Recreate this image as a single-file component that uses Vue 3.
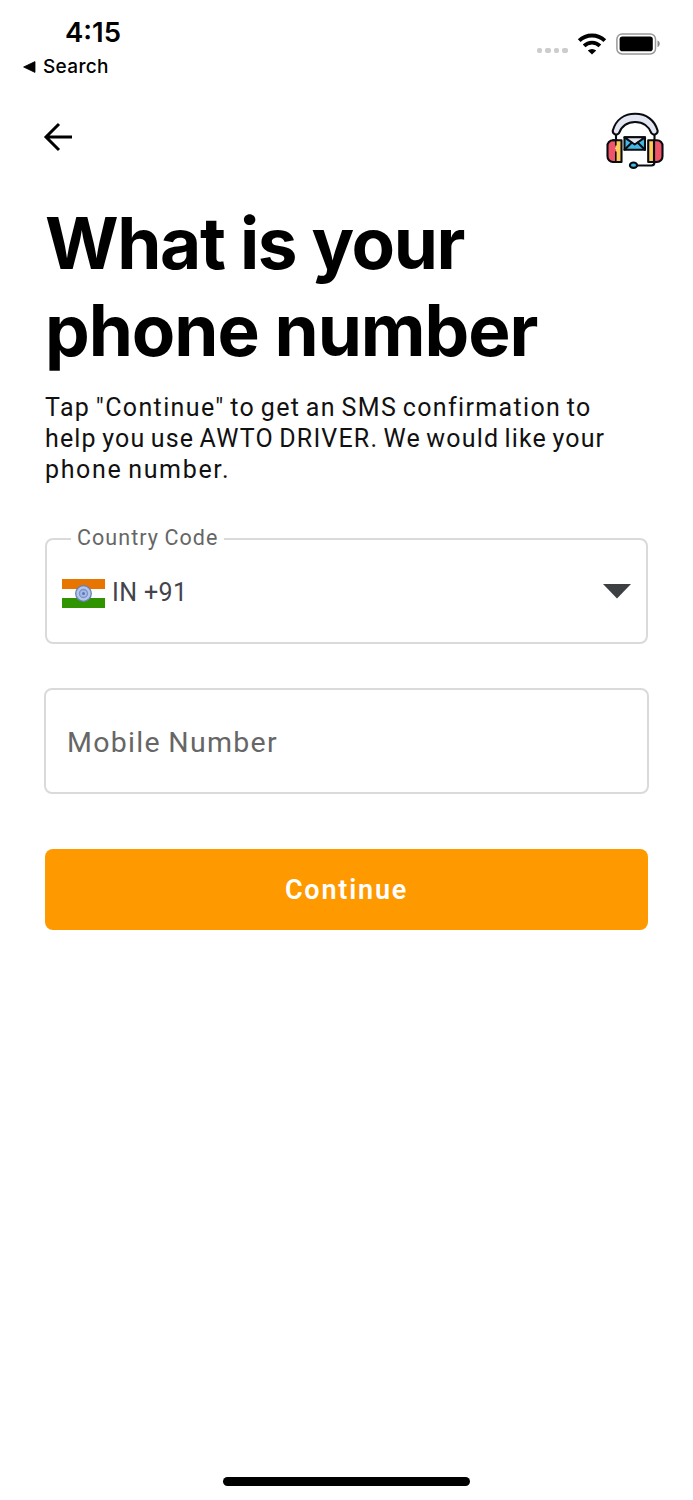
<template>
  <div class="screen">
    <header class="status-bar">
      <div class="status-left">
        <span class="time">4:15</span>
        <a class="back-app">
          <svg width="13" height="12" viewBox="0 0 13 12"><path d="M.6 6 12 .6v10.8z" stroke="#000" stroke-width=".8" stroke-linejoin="round" /></svg>
          <span>Search</span>
        </a>
      </div>
      <div class="status-right">
        <div class="signal"><i v-for="n in 4" :key="n"></i></div>
        <svg class="wifi" width="30" height="22" viewBox="0 0 30 22" fill="none">
          <path d="M2.2 7.7a18.3 18.3 0 0 1 25.6 0" stroke="#000" stroke-width="3.9" />
          <path d="M7.1 12.8a11.2 11.2 0 0 1 15.8 0" stroke="#000" stroke-width="3.8" />
          <path d="M10.8 17.6a6 6 0 0 1 8.4 0L15 21.6z" fill="#000" />
        </svg>
        <svg class="battery" width="46" height="22" viewBox="0 0 46 22">
          <rect x=".9" y=".9" width="38.6" height="20" rx="5.2" fill="none" stroke="#999" stroke-width="1.5" />
          <rect x="3.6" y="3.6" width="33.2" height="14.6" rx="2.8" />
          <path d="M41.5 7.6c3 1 3 5.6 0 6.6z" fill="#888" />
        </svg>
      </div>
    </header>

    <nav class="nav">
      <button class="icon-btn" aria-label="Back">
        <svg width="30" height="30" viewBox="0 0 30 30" fill="none" stroke="#000" stroke-width="3">
          <path d="M29 15H3M16 2 3 15l13 13" />
        </svg>
      </button>
      <button class="icon-btn" aria-label="Support">
        <svg width="58" height="58" viewBox="0 0 58 58" stroke="#080c10" stroke-width="2.1" stroke-linejoin="round" stroke-linecap="round">
          <path d="M10 20v9M48.5 20v9" fill="none" />
          <path d="M6.8 18.5C10 7.5 18.5 1.8 29.2 1.8S48.5 7.5 51.6 18.5a3.5 3.5 0 0 1-6.2 2.7C43 14.5 37 10 29.2 10S15.5 14.5 13 21.2a3.5 3.5 0 0 1-6.2-2.7z" fill="#e4e7f2" />
          <path d="M11 28.3H7a5.5 5.5 0 0 0-5.5 6v10A5.5 5.5 0 0 0 7 50h5z" fill="#ee5568" />
          <path d="M10 28.3h5.5V50H10z" fill="#ffcc57" stroke="none" />
          <path d="M7 28.3h8.5V50H7" fill="none" />
          <path d="M48 28.3h3a5.5 5.5 0 0 1 5.5 6v10A5.5 5.5 0 0 1 51 50h-3z" fill="#ee5568" />
          <path d="M42.2 28.3H48V50h-5.8z" fill="#ffcc57" />
          <path d="M9.8 29v4M9.8 40v9" stroke-width="1.6" />
          <path d="M9.8 36.3v.2" stroke="#ffd8a0" stroke-width="1.6" />
          <path d="M18.5 25.3H39v12.4H18.5z" fill="#43b9e8" />
          <path d="m18.5 25.3 10.2 7.2L39 25.3z" fill="#e4e7f2" />
          <path d="m18.5 37.7 7.2-7M39 37.7l-7.2-7" fill="none" />
          <path d="M48.5 50c0 2.5-1 3.5-3 3.5H31" fill="none" />
          <ellipse cx="27.5" cy="53.2" rx="3.6" ry="2.7" fill="#43b9e8" />
        </svg>
      </button>
    </nav>

    <main class="content">
      <h1 class="title">
        <span class="title-first">What is your</span>
        <span class="title-second">phone number</span>
      </h1>
      <p class="intro">
        <span class="line-a">Tap "Continue" to get an SMS confirmation to</span>
        <span class="line-b">help you use AWTO DRIVER. We would like your</span>
        <span class="line-c">phone number.</span>
      </p>

      <fieldset class="country">
        <legend>Country Code</legend>
        <div class="country-value">
          <svg class="flag" width="43" height="29" viewBox="0 0 43 29">
            <path fill="#e87500" d="M0 0h43v10H0z" />
            <path fill="#fff" d="M0 10h43v9H0z" />
            <path fill="#309400" d="M0 19h43v10H0z" />
            <circle cx="21.5" cy="14.5" r="7.8" fill="#b5c5e8" stroke="#6980b8" stroke-width="1.3" />
            <circle cx="21.5" cy="14.5" r="4" fill="#a7bae4" stroke="#7b92cd" stroke-width="1.3" />
            <circle cx="21.5" cy="14.5" r="1.5" fill="#5875bd" />
          </svg>
          <span class="dial">IN +91</span>
          <svg class="caret" width="28" height="15" viewBox="0 0 28 15"><path fill="#3c4043" d="M0 0h28L14 14.5z" /></svg>
        </div>
      </fieldset>

      <input class="mobile" type="tel" placeholder="Mobile Number" />
      <button class="continue">Continue</button>
    </main>

    <div class="home-indicator"></div>
  </div>
</template>

<script setup>
</script>

<style>
body { margin: 0; background: #fff; }
</style>

<style scoped>
.screen {
  box-sizing: border-box; width: 693px; height: 1500px;
  display: flex; flex-direction: column;
  background: #fff; color: #000; overflow: hidden;
  font-family: Roboto, "Liberation Sans", sans-serif;
}

/* Status bar */
.status-bar {
  height: 100px; display: flex; justify-content: space-between;
  padding: 0 31.5px 0 23px; font-family: Inter, sans-serif;
}
.status-left { display: flex; flex-direction: column; padding-top: 15px; }
.time { margin-left: 42px; font-size: 27.5px; line-height: 34px; font-weight: 600; }
.back-app {
  display: flex; align-items: center; gap: 7px; margin-top: 6px;
  font-size: 19px; line-height: 24px; font-weight: 500; letter-spacing: .35px;
}
.status-right { display: flex; align-items: flex-start; padding-top: 33px; }
.signal { display: flex; gap: 3px; margin: 15px 9px 0 0; }
.signal i { width: 5.4px; height: 5.4px; border-radius: 2px; background: #ccc; }
.wifi { margin: -.5px 9px 0 0; }

/* Nav */
.nav {
  height: 75px; display: flex; justify-content: space-between; align-items: flex-start;
  padding: 12px 29px 0 42.5px;
}
.icon-btn { padding: 0; border: 0; background: none; display: flex; }
.icon-btn:first-child { margin-top: 10px; }

/* Content */
.content { padding: 13px 45px 0; }
.title {
  margin: 0; font-family: Inter, sans-serif;
  font-size: 71px; line-height: 86.5px; font-weight: 700;
}
.title span, .intro span { display: block; white-space: nowrap; }
.title-first { letter-spacing: -1.4px; }
.title-second { letter-spacing: -1.05px; }
.intro {
  margin: 19px 0 0; font-size: 25px; line-height: 31.2px;
  letter-spacing: 1.36px; word-spacing: -2px; color: #111;
}
.intro .line-b { letter-spacing: 1.17px; }
.intro .line-c { letter-spacing: 1.65px; }

.country {
  box-sizing: border-box; height: 119px; margin: 39px 0 0; padding: 0 15px;
  border: 2px solid #dadada; border-radius: 8px; min-width: 0;
}
.country legend {
  margin-left: 9px; padding: 0 6px 2px; color: #666;
  font-size: 21.5px; line-height: 26px; letter-spacing: 1.05px; word-spacing: -1px;
}
.country-value { display: flex; align-items: center; height: 82px; }
.dial { margin: -2px 0 0 7px; font-size: 25px; letter-spacing: .4px; color: #44444c; }
.caret { margin: -5px 0 0 auto; }

.mobile {
  box-sizing: border-box; display: block; width: 605px; height: 106px;
  margin: 44px -1px 0; padding: 3px 21px 0;
  border: 2px solid #dadada; border-radius: 8px; outline: none;
  font-family: inherit; font-size: 28.5px; letter-spacing: 1.3px; word-spacing: -1px; color: #222;
}
.mobile::placeholder { color: #666; opacity: 1; }

.continue {
  display: block; width: 100%; height: 81px; margin-top: 55px; padding: 2px 0 0;
  border: 0; border-radius: 8px; background: #ff9900; color: #fff;
  font-family: inherit; font-size: 27px; font-weight: 600; letter-spacing: 1.8px;
}

.home-indicator {
  width: 247px; height: 9px; margin: auto auto 14px; border-radius: 5px; background: #000;
}
</style>
